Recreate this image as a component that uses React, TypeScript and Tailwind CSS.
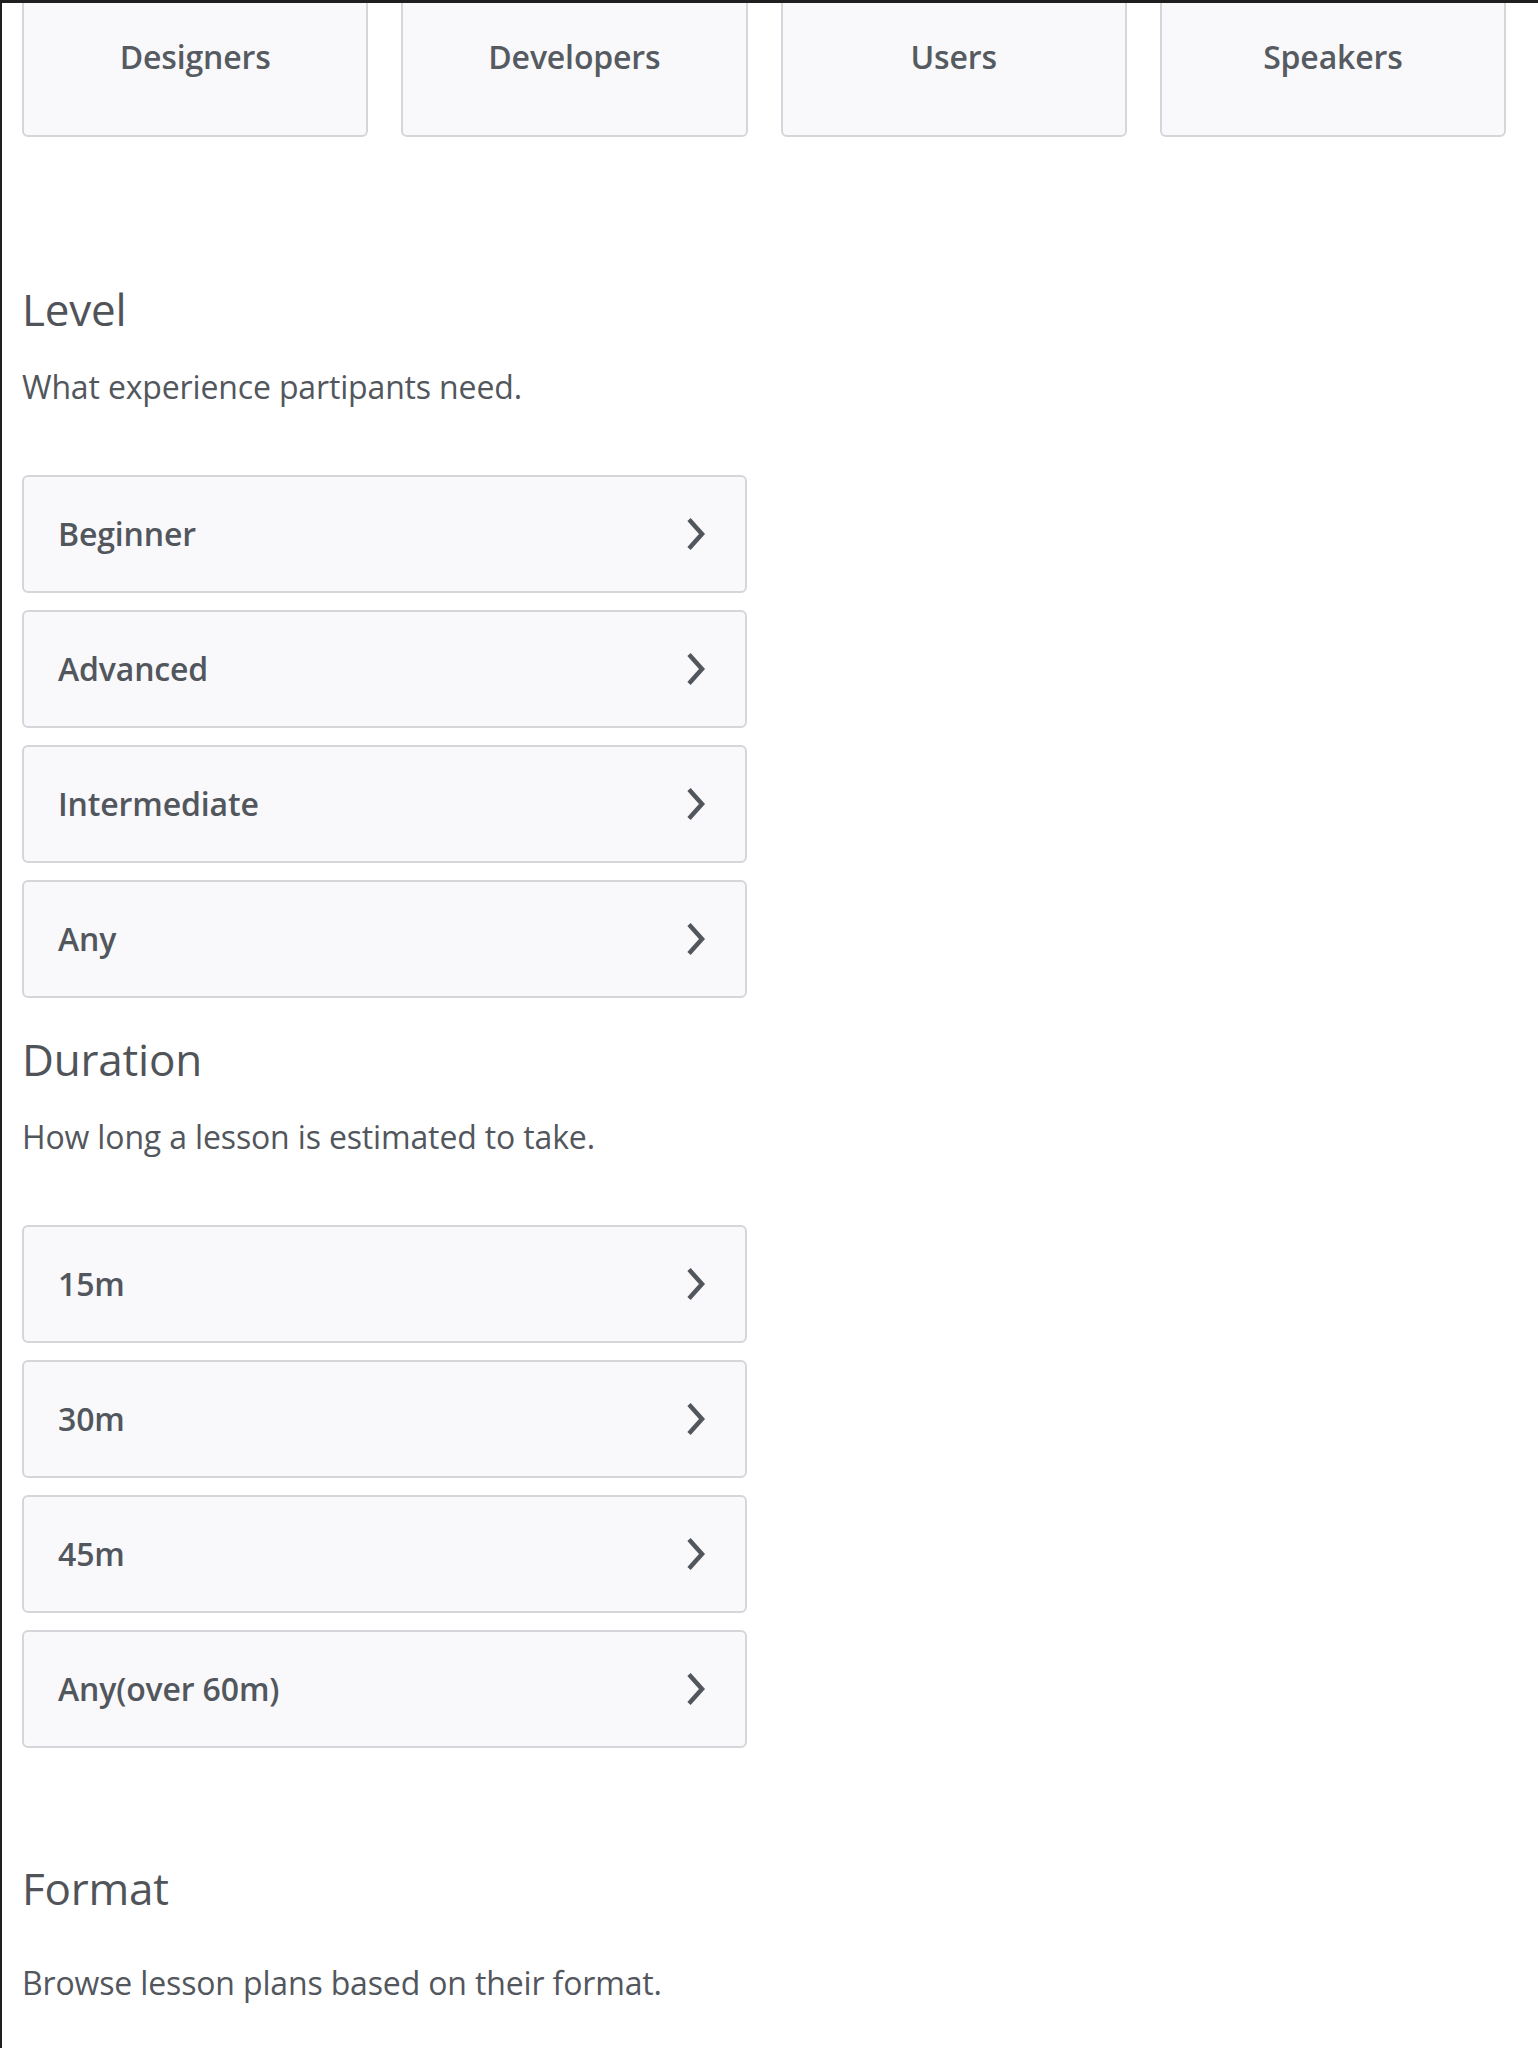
import React from 'react';

const audiences = ['Designers', 'Developers', 'Users', 'Speakers'];
const levels = ['Beginner', 'Advanced', 'Intermediate', 'Any'];
const durations = ['15m', '30m', '45m', 'Any(over 60m)'];

const Chevron = () => (
  <svg width="20" height="34" viewBox="0 0 20 34" fill="none" aria-hidden="true">
    <path
      d="M3 2.5 L16 17 L3 31.5"
      stroke="#52565d"
      strokeWidth="4.5"
      strokeLinecap="butt"
      strokeLinejoin="miter"
    />
  </svg>
);

const OptionRow = ({ label }: { label: string }) => (
  <button className="h-[118px] w-full rounded-md border-2 border-[#d6d6da] bg-[#f9f9fb] flex items-center justify-between pl-[34px] pr-[39px] text-left text-[32px] leading-[48px] tracking-[-0.15px] font-semibold text-[#52565d] cursor-pointer">
    <span>{label}</span>
    <Chevron />
  </button>
);

export default function App() {
  return (
    <div className="min-h-screen bg-white border-t-[3px] border-l-2 border-[#1f1f1f] overflow-hidden font-['Open_Sans',sans-serif] text-[#52565d]">
      {/* Audience cards (top part scrolled out of view) */}
      <div className="ml-5 mr-8 -mt-[26px] grid grid-cols-4 gap-x-[33px]">
        {audiences.map((a) => (
          <div
            key={a}
            className="h-[160px] rounded-md border-2 border-[#d6d6da] bg-[#f9f9fb] flex items-center justify-center text-[32px] leading-[48px] tracking-[-0.15px] font-semibold text-[#565a61]"
          >
            {a}
          </div>
        ))}
      </div>

      {/* Level */}
      <section className="ml-5 mt-[146px]">
        <h2 className="text-[44px] leading-[52px] font-normal tracking-[-0.2px] text-[#505459]">Level</h2>
        <p className="mt-[28px] text-[32px] leading-[48px] tracking-[-0.15px]">What experience partipants need.</p>
        <div className="mt-[64px] w-[725px] flex flex-col gap-[17px]">
          {levels.map((l) => (
            <OptionRow key={l} label={l} />
          ))}
        </div>
      </section>

      {/* Duration */}
      <section className="ml-5 mt-[35px]">
        <h2 className="text-[44px] leading-[52px] font-normal tracking-[-0.2px] text-[#505459]">Duration</h2>
        <p className="mt-[28px] text-[32px] leading-[48px] tracking-[-0.15px]">How long a lesson is estimated to take.</p>
        <div className="mt-[64px] w-[725px] flex flex-col gap-[17px]">
          {durations.map((d) => (
            <OptionRow key={d} label={d} />
          ))}
        </div>
      </section>

      {/* Format */}
      <section className="ml-5 mt-[114px]">
        <h2 className="text-[44px] leading-[52px] font-normal tracking-[-0.2px] text-[#505459]">Format</h2>
        <p className="mt-[45px] text-[32px] leading-[48px] tracking-[-0.15px]">Browse lesson plans based on their format.</p>
      </section>
    </div>
  );
}
